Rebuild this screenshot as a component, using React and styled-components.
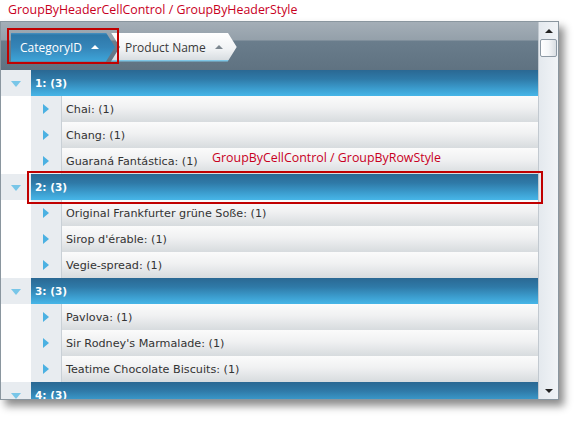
import styled, { createGlobalStyle } from "styled-components"

const GlobalStyle = createGlobalStyle`
  html, body {
    margin: 0;
    padding: 0;
    background: #fff;
    font-family: "Open Sans", "Liberation Sans", sans-serif;
  }
`

const Page = styled.div`
  width: 580px;
  height: 421px;
  overflow: hidden;
`

const Caption = styled.div`
  height: 21px;
  padding-left: 8px;
  font-size: 12.4px;
  line-height: 19px;
  color: #c8001e;
  white-space: nowrap;
`

const Frame = styled.div`
  position: relative;
  display: flex;
  width: 557px;
  height: 377px;
  border: 1px solid #8a969f;
  box-shadow: 5px 6px 8px rgba(0, 0, 0, 0.45);
  background: #fff;
`

const Main = styled.div`
  flex: 1;
  display: flex;
  flex-direction: column;
  overflow: hidden;
`

const GroupPanel = styled.div`
  height: 48px;
  flex-shrink: 0;
  display: flex;
  align-items: center;
  padding: 2px 0 0 10px;
  box-sizing: border-box;
  background: linear-gradient(#a4aeb7 0px, #94a0aa 18px, #6a7d8c 19px, #5f7281 48px);
`

const HeaderCell = styled.div`
  height: 29px;
  display: flex;
  align-items: center;
  gap: 9px;
  box-sizing: border-box;
  padding: 0 ${p => (p.first ? "16px" : "14px")} 0 ${p => (p.first ? "9px" : "14px")};
  margin-left: ${p => (p.first ? "0" : "-4px")};
  font-size: 12px;
  color: ${p => (p.active ? "#fff" : "#3a3a3a")};
  background: ${p =>
    p.active
      ? "linear-gradient(#4a93c2 0px, #2e78a9 2px, #3585b8 50%, #3ea6da 100%)"
      : "linear-gradient(#ffffff 0%, #f1f3f5 55%, #d9dee2 92%, #7fc6e6 93%, #7fc6e6 100%)"};
  clip-path: ${p =>
    p.first
      ? "polygon(0 0, calc(100% - 9px) 0, 100% 50%, calc(100% - 9px) 100%, 0 100%)"
      : "polygon(0 0, calc(100% - 9px) 0, 100% 50%, calc(100% - 9px) 100%, 0 100%, 9px 50%)"};
  white-space: nowrap;
`

const SortArrow = styled.span`
  width: 0;
  height: 0;
  border-left: 4px solid transparent;
  border-right: 4px solid transparent;
  border-bottom: 4px solid ${p => (p.light ? "#fff" : "#7d8790")};
`

const Rows = styled.div`
  flex: 1;
  overflow: hidden;
  display: flex;
  flex-direction: column;
`

const Row = styled.div`
  height: 26px;
  flex-shrink: 0;
  display: flex;
`

const Indent = styled.div`
  width: 30px;
  flex-shrink: 0;
  display: flex;
  align-items: center;
  justify-content: center;
  background: ${p => (p.blank ? "#fff" : "#e8ecf0")};
`

const TriangleDown = styled.span`
  width: 0;
  height: 0;
  margin-top: 2px;
  border-left: 5px solid transparent;
  border-right: 5px solid transparent;
  border-top: 6px solid #78c6e8;
`

const TriangleRight = styled.span`
  width: 0;
  height: 0;
  border-top: 5px solid transparent;
  border-bottom: 5px solid transparent;
  border-left: 6px solid #4bb1e2;
`

const GroupBar = styled.div`
  flex: 1;
  display: flex;
  align-items: center;
  padding-left: 4px;
  font-family: "DejaVu Sans", Verdana, sans-serif;
  font-size: 10.5px;
  font-weight: bold;
  color: #fff;
  background: linear-gradient(#2a6893 0%, #2f7aa8 35%, #3b9bcc 70%, #47b6e8 100%);
`

const DataCell = styled.div`
  flex: 1;
  display: flex;
  align-items: center;
  padding-left: 4px;
  padding-top: 1px;
  border-left: 1px solid #c9d0d6;
  font-family: "DejaVu Sans", Verdana, sans-serif;
  font-size: 11.2px;
  color: #333;
  background: linear-gradient(#fbfbfb 0%, #f0f1f2 45%, #d7dbde 100%);
`

const ScrollBar = styled.div`
  width: 19px;
  flex-shrink: 0;
  display: flex;
  flex-direction: column;
  align-items: center;
  border-left: 1px solid #c2c9d0;
  background: linear-gradient(90deg, #e4e9ee, #f1f4f7);
`

const ScrollButton = styled.div`
  height: 17px;
  width: 100%;
  display: flex;
  align-items: center;
  justify-content: center;
`

const ScrollArrow = styled.span`
  width: 0;
  height: 0;
  border-left: 4px solid transparent;
  border-right: 4px solid transparent;
  ${p => (p.down ? "border-top: 4px solid #222;" : "border-bottom: 4px solid #222;")}
`

const Thumb = styled.div`
  width: 15px;
  height: 16px;
  border: 1px solid #8d99a4;
  border-radius: 2px;
  background: linear-gradient(90deg, #ffffff, #f4f6f8 50%, #d9dee3);
`

const Spacer = styled.div`
  flex: 1;
`

const Highlight = styled.div`
  position: absolute;
  left: ${p => p.x}px;
  top: ${p => p.y}px;
  width: ${p => p.w}px;
  height: ${p => p.h}px;
  box-sizing: border-box;
  border: 2px solid #c00000;
  pointer-events: none;
`

const Note = styled.div`
  position: absolute;
  left: ${p => p.x}px;
  top: ${p => p.y}px;
  font-size: 12.4px;
  line-height: 19px;
  color: #c8001e;
  white-space: nowrap;
`

const groups = [
  { key: 1, items: ["Chai", "Chang", "Guaraná Fantástica"] },
  { key: 2, items: ["Original Frankfurter grüne Soße", "Sirop d'érable", "Vegie-spread"] },
  { key: 3, items: ["Pavlova", "Sir Rodney's Marmalade", "Teatime Chocolate Biscuits"] },
  { key: 4, items: [] },
]

function App() {
  return (
    <Page>
      <GlobalStyle />
      <Caption>GroupByHeaderCellControl / GroupByHeaderStyle</Caption>
      <Frame>
        <Main>
          <GroupPanel>
            <HeaderCell first active>
              CategoryID <SortArrow light />
            </HeaderCell>
            <HeaderCell>
              Product Name <SortArrow />
            </HeaderCell>
          </GroupPanel>
          <Rows>
            {groups.map(g => (
              <div key={g.key}>
                <Row>
                  <Indent>
                    <TriangleDown />
                  </Indent>
                  <GroupBar>{g.key}: (3)</GroupBar>
                </Row>
                {g.items.map(name => (
                  <Row key={name}>
                    <Indent blank />
                    <Indent>
                      <TriangleRight />
                    </Indent>
                    <DataCell>{name}: (1)</DataCell>
                  </Row>
                ))}
              </div>
            ))}
          </Rows>
        </Main>
        <ScrollBar>
          <ScrollButton>
            <ScrollArrow />
          </ScrollButton>
          <Thumb />
          <Spacer />
          <ScrollButton>
            <ScrollArrow down />
          </ScrollButton>
        </ScrollBar>
        <Highlight x={6} y={6} w={112} h={36} />
        <Highlight x={26} y={149} w={516} h={33} />
        <Note x={211} y={126}>GroupByCellControl / GroupByRowStyle</Note>
      </Frame>
    </Page>
  )
}

export default App
